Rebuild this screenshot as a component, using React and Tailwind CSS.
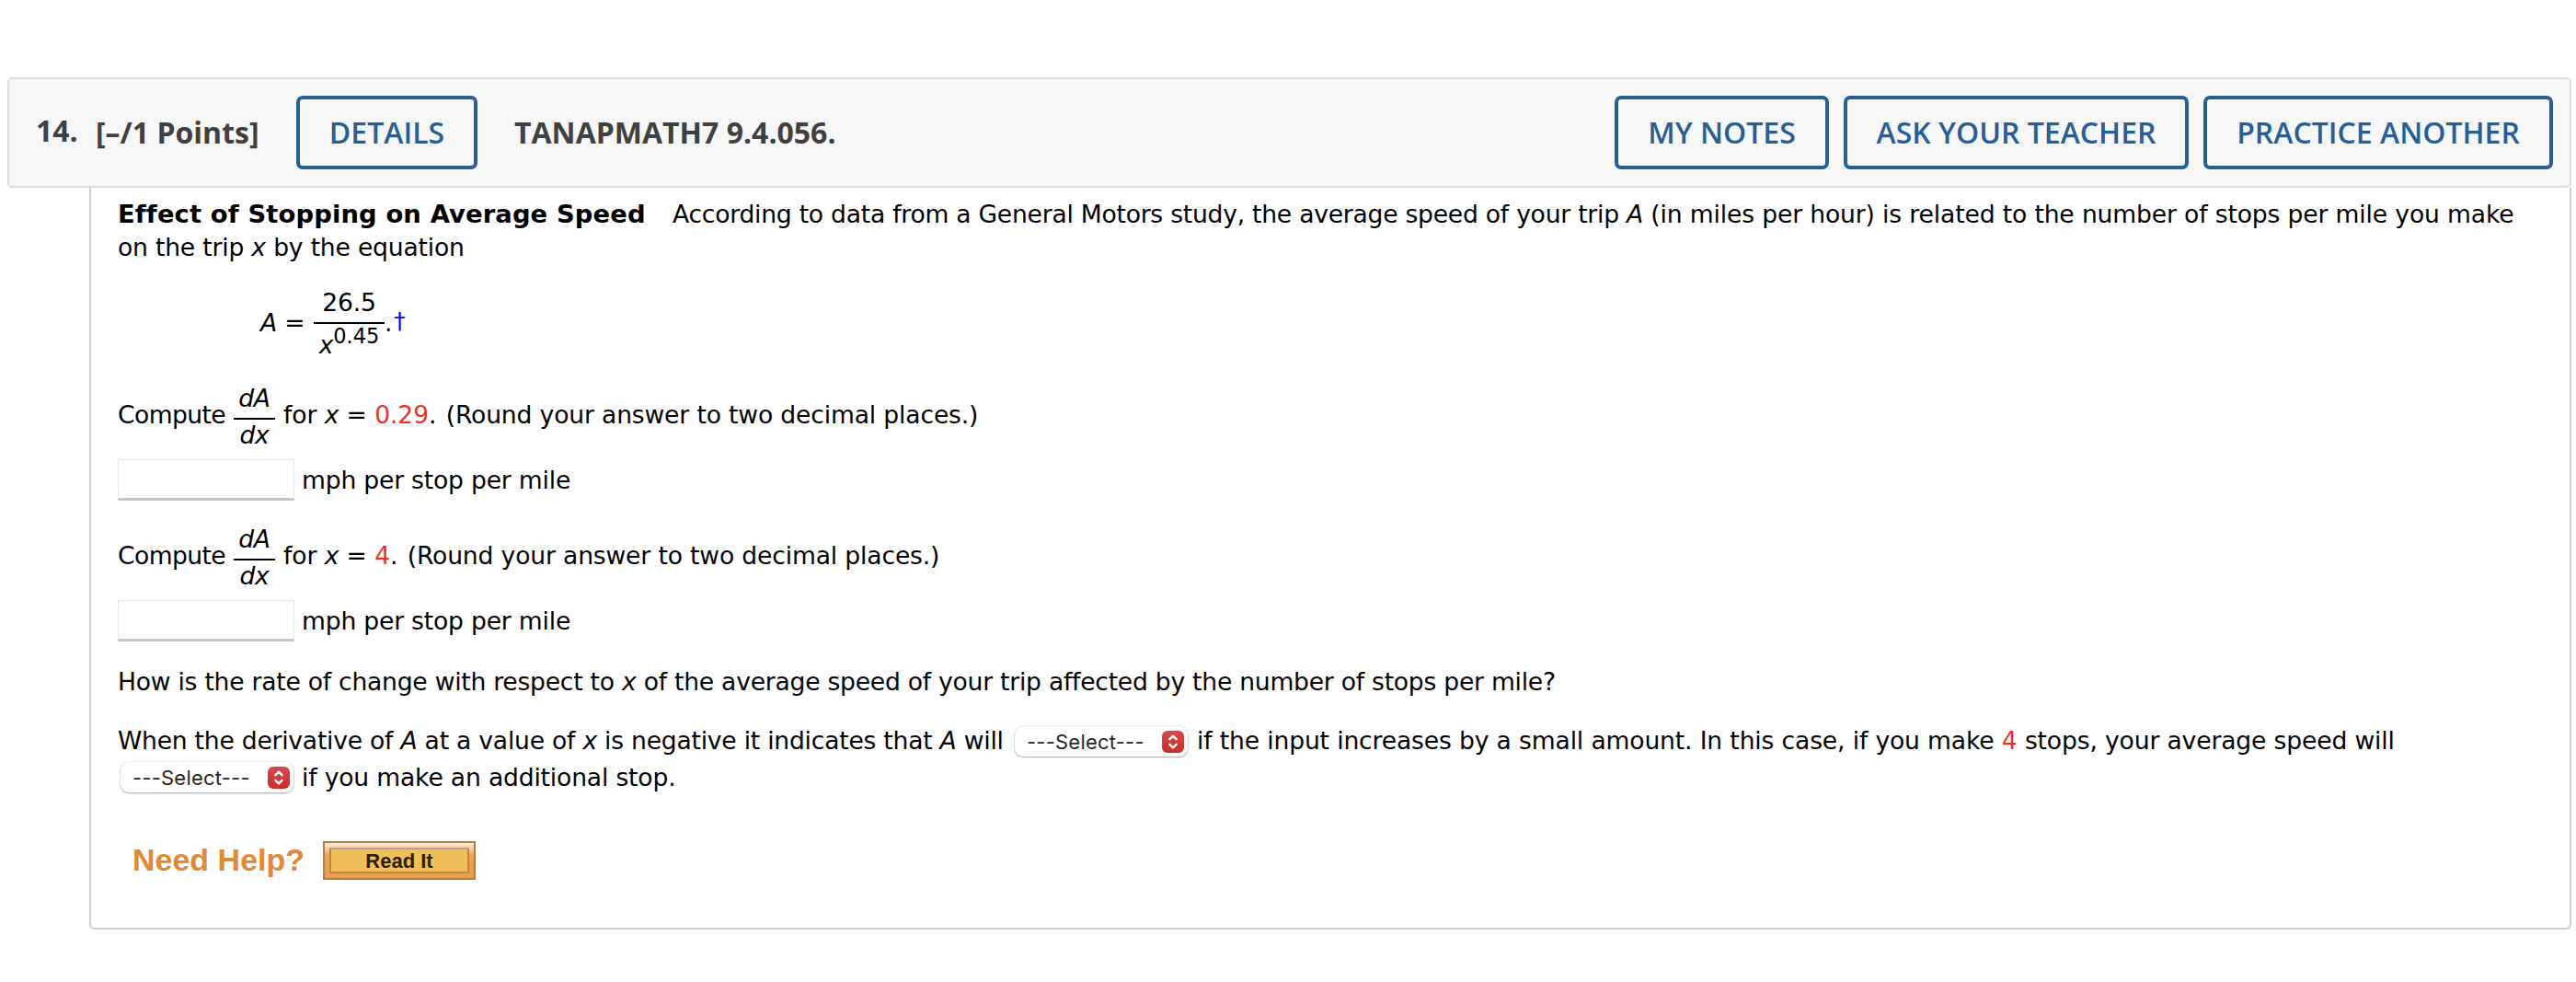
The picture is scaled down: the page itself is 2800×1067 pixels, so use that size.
const HeaderButton = ({ className = '', children }) => (
    <button className={`flex h-20 items-center justify-center rounded-[7px] border-4 border-[#275f95] font-semibold text-[#275f95] whitespace-nowrap ${className}`}>
        {children}
    </button>
);

const Var = ({ children }) => <i className="italic">{children}</i>;

const Red = ({ children }) => <span className="text-[#ea3323]">{children}</span>;

// dA over dx
const Derivative = () => (
    <span className="flex w-[45px] flex-col text-center leading-[34px] italic">
        <span className="border-b-2 border-black pb-1">dA</span>
        <span>dx</span>
    </span>
);

const SelectBox = ({ className = '' }) => (
    <span className={`flex h-[33px] w-[188px] shrink-0 items-center justify-between rounded-[9px] bg-white pr-1 pl-[13px] shadow-[0_0_0_1px_rgba(0,0,0,0.06),0_1px_2px_rgba(0,0,0,0.3)] ${className}`}>
        <span className="font-['Inter',sans-serif] text-[22px] leading-6 tracking-[0.22px] text-[#262626]">---Select---</span>
        <span className="flex h-6 w-6 items-center justify-center rounded-[6px] bg-linear-to-b from-[#d5494b] to-[#c92d2b]">
            <svg width="12" height="18" viewBox="0 0 12 18" fill="none" stroke="white" strokeWidth="2.4" strokeLinecap="round" strokeLinejoin="round">
                <path d="M2.4 6.2 6 2.7l3.6 3.5M2.4 11.8 6 15.3l3.6-3.5" />
            </svg>
        </span>
    </span>
);

const ComputeRow = ({ value, className = '' }) => (
    <div className={`flex whitespace-pre ${className}`}>
        <span className="mt-[18px] w-[126px] leading-[34px] tracking-[-0.6px]">Compute</span>
        <Derivative />
        <span className="mt-[18px] ml-[9px] leading-[34px] tracking-[-0.1px]">
            for <Var>x</Var> = <Red>{value}</Red>. <span className="ml-[2px] tracking-[-0.16px]">(Round your answer to two decimal places.)</span>
        </span>
    </div>
);

const AnswerRow = () => (
    <div className="mt-[9px] flex h-11 items-center">
        <input className="mt-px h-[45px] w-48 border border-b-[3px] border-[#e6e6e6] border-b-[#c4c4c4] bg-white" />
        <span className="mt-0.5 ml-2 leading-[34px]">mph per stop per mile</span>
    </div>
);

export default function App() {
    return (
        <div className="h-[1067px] w-[2800px] overflow-hidden bg-white pt-[84px]">
            <header className="ml-2 flex h-[120px] w-[2787px] items-center rounded-[5px] border-2 border-[#dedede] bg-[#f7f7f7] pr-[18px] pl-[29px] font-['Open_Sans',sans-serif] text-[32px] leading-10 text-[#404040]">
                <span className="w-[65px] pb-1 font-bold">14.</span>
                <span className="w-[218px] font-bold whitespace-nowrap">[–/1 Points]</span>
                <HeaderButton className="w-[197px]">DETAILS</HeaderButton>
                <span className="ml-[40px] font-bold">TANAPMATH7 9.4.056.</span>
                <div className="ml-auto flex gap-4">
                    <HeaderButton className="w-[233px]">MY NOTES</HeaderButton>
                    <HeaderButton className="w-[375px]">ASK YOUR TEACHER</HeaderButton>
                    <HeaderButton className="w-[380px]">PRACTICE ANOTHER</HeaderButton>
                </div>
            </header>

            <main className="ml-[97px] h-[806px] w-[2698px] rounded-b-[6px] border-x-2 border-b-2 border-[#cccccc] pt-[11px] pl-[29px] font-['DejaVu_Sans',sans-serif] text-[26.6px] leading-9 tracking-[-0.2px] text-black">
                <div className="flex whitespace-pre">
                    <b className="w-[603px] text-[27.4px] font-bold tracking-[0.12px]">Effect of Stopping on Average Speed</b>
                    <span className="tracking-[-0.25px]">According to data from a General Motors study, the average speed of your trip </span>
                    <span className="tracking-[-0.15px]">
                        <Var>A</Var> (in miles per hour) is related to the number of stops per mile you make
                    </span>
                </div>
                <div>on the trip <Var>x</Var> by the equation</div>

                <div className="mt-[25px] ml-[155px] flex">
                    <span className="mt-[22px] w-[58px] leading-[34px] whitespace-pre"><Var>A</Var> =</span>
                    <span className="flex w-[77px] flex-col text-center leading-[34px]">
                        <span className="border-b-2 border-black pb-1">26.5</span>
                        <span className="flex h-10 justify-center">
                            <span className="pt-[6px] italic">x</span>
                            <span className="-mt-[4px] text-[22.5px] tracking-normal">0.45</span>
                        </span>
                    </span>
                    <span className="mt-[22px] leading-[34px]">.</span>
                    <a className="mt-[20px] ml-[2px] text-[25px] leading-[34px] text-[#0000ee]">†</a>
                </div>

                <ComputeRow value="0.29" className="mt-[24px]" />
                <AnswerRow />
                <ComputeRow value="4" className="mt-[26px]" />
                <AnswerRow />

                <div className="mt-[27px] tracking-[-0.25px]">
                    How is the rate of change with respect to <Var>x</Var> of the average speed of your trip affected by the number of stops per mile?
                </div>

                <div className="mt-[28px] flex whitespace-pre">
                    <span className="w-[975px] tracking-[-0.24px]">
                        When the derivative of <Var>A</Var> at a value of <Var>x</Var> is negative it indicates that <Var>A</Var> will
                    </span>
                    <SelectBox className="mt-0.5" />
                    <span className="ml-[10px] tracking-[-0.155px]">
                        if the input increases by a small amount. In this case, if you make <Red>4</Red> stops, your average speed will
                    </span>
                </div>
                <div className="mt-[4px] flex whitespace-pre">
                    <SelectBox className="mt-px ml-[3px]" />
                    <span className="ml-[9px] tracking-[-0.18px]">if you make an additional stop.</span>
                </div>

                <div className="mt-[51px] flex h-[42px] pl-[16px] tracking-normal">
                    <span className="w-[207px] font-['Liberation_Sans',sans-serif] text-[34px] leading-[40px] font-bold text-[#e08a34]">Need Help?</span>
                    <button className="flex h-[42px] w-[166px] items-center justify-center border-2 border-[#b37c3e] bg-linear-to-b from-[#fdeedd] via-[#eea454] via-35% to-[#ea9c46] p-[5px] font-['Liberation_Sans',sans-serif] text-[22px] font-bold text-[#2b1d05]">
                        <span className="flex h-full w-full items-center justify-center border-2 border-[#bd8843] border-t-[#c4a172] bg-[#f1be5c] pt-0.5 leading-6">Read It</span>
                    </button>
                </div>
            </main>
        </div>
    );
}
